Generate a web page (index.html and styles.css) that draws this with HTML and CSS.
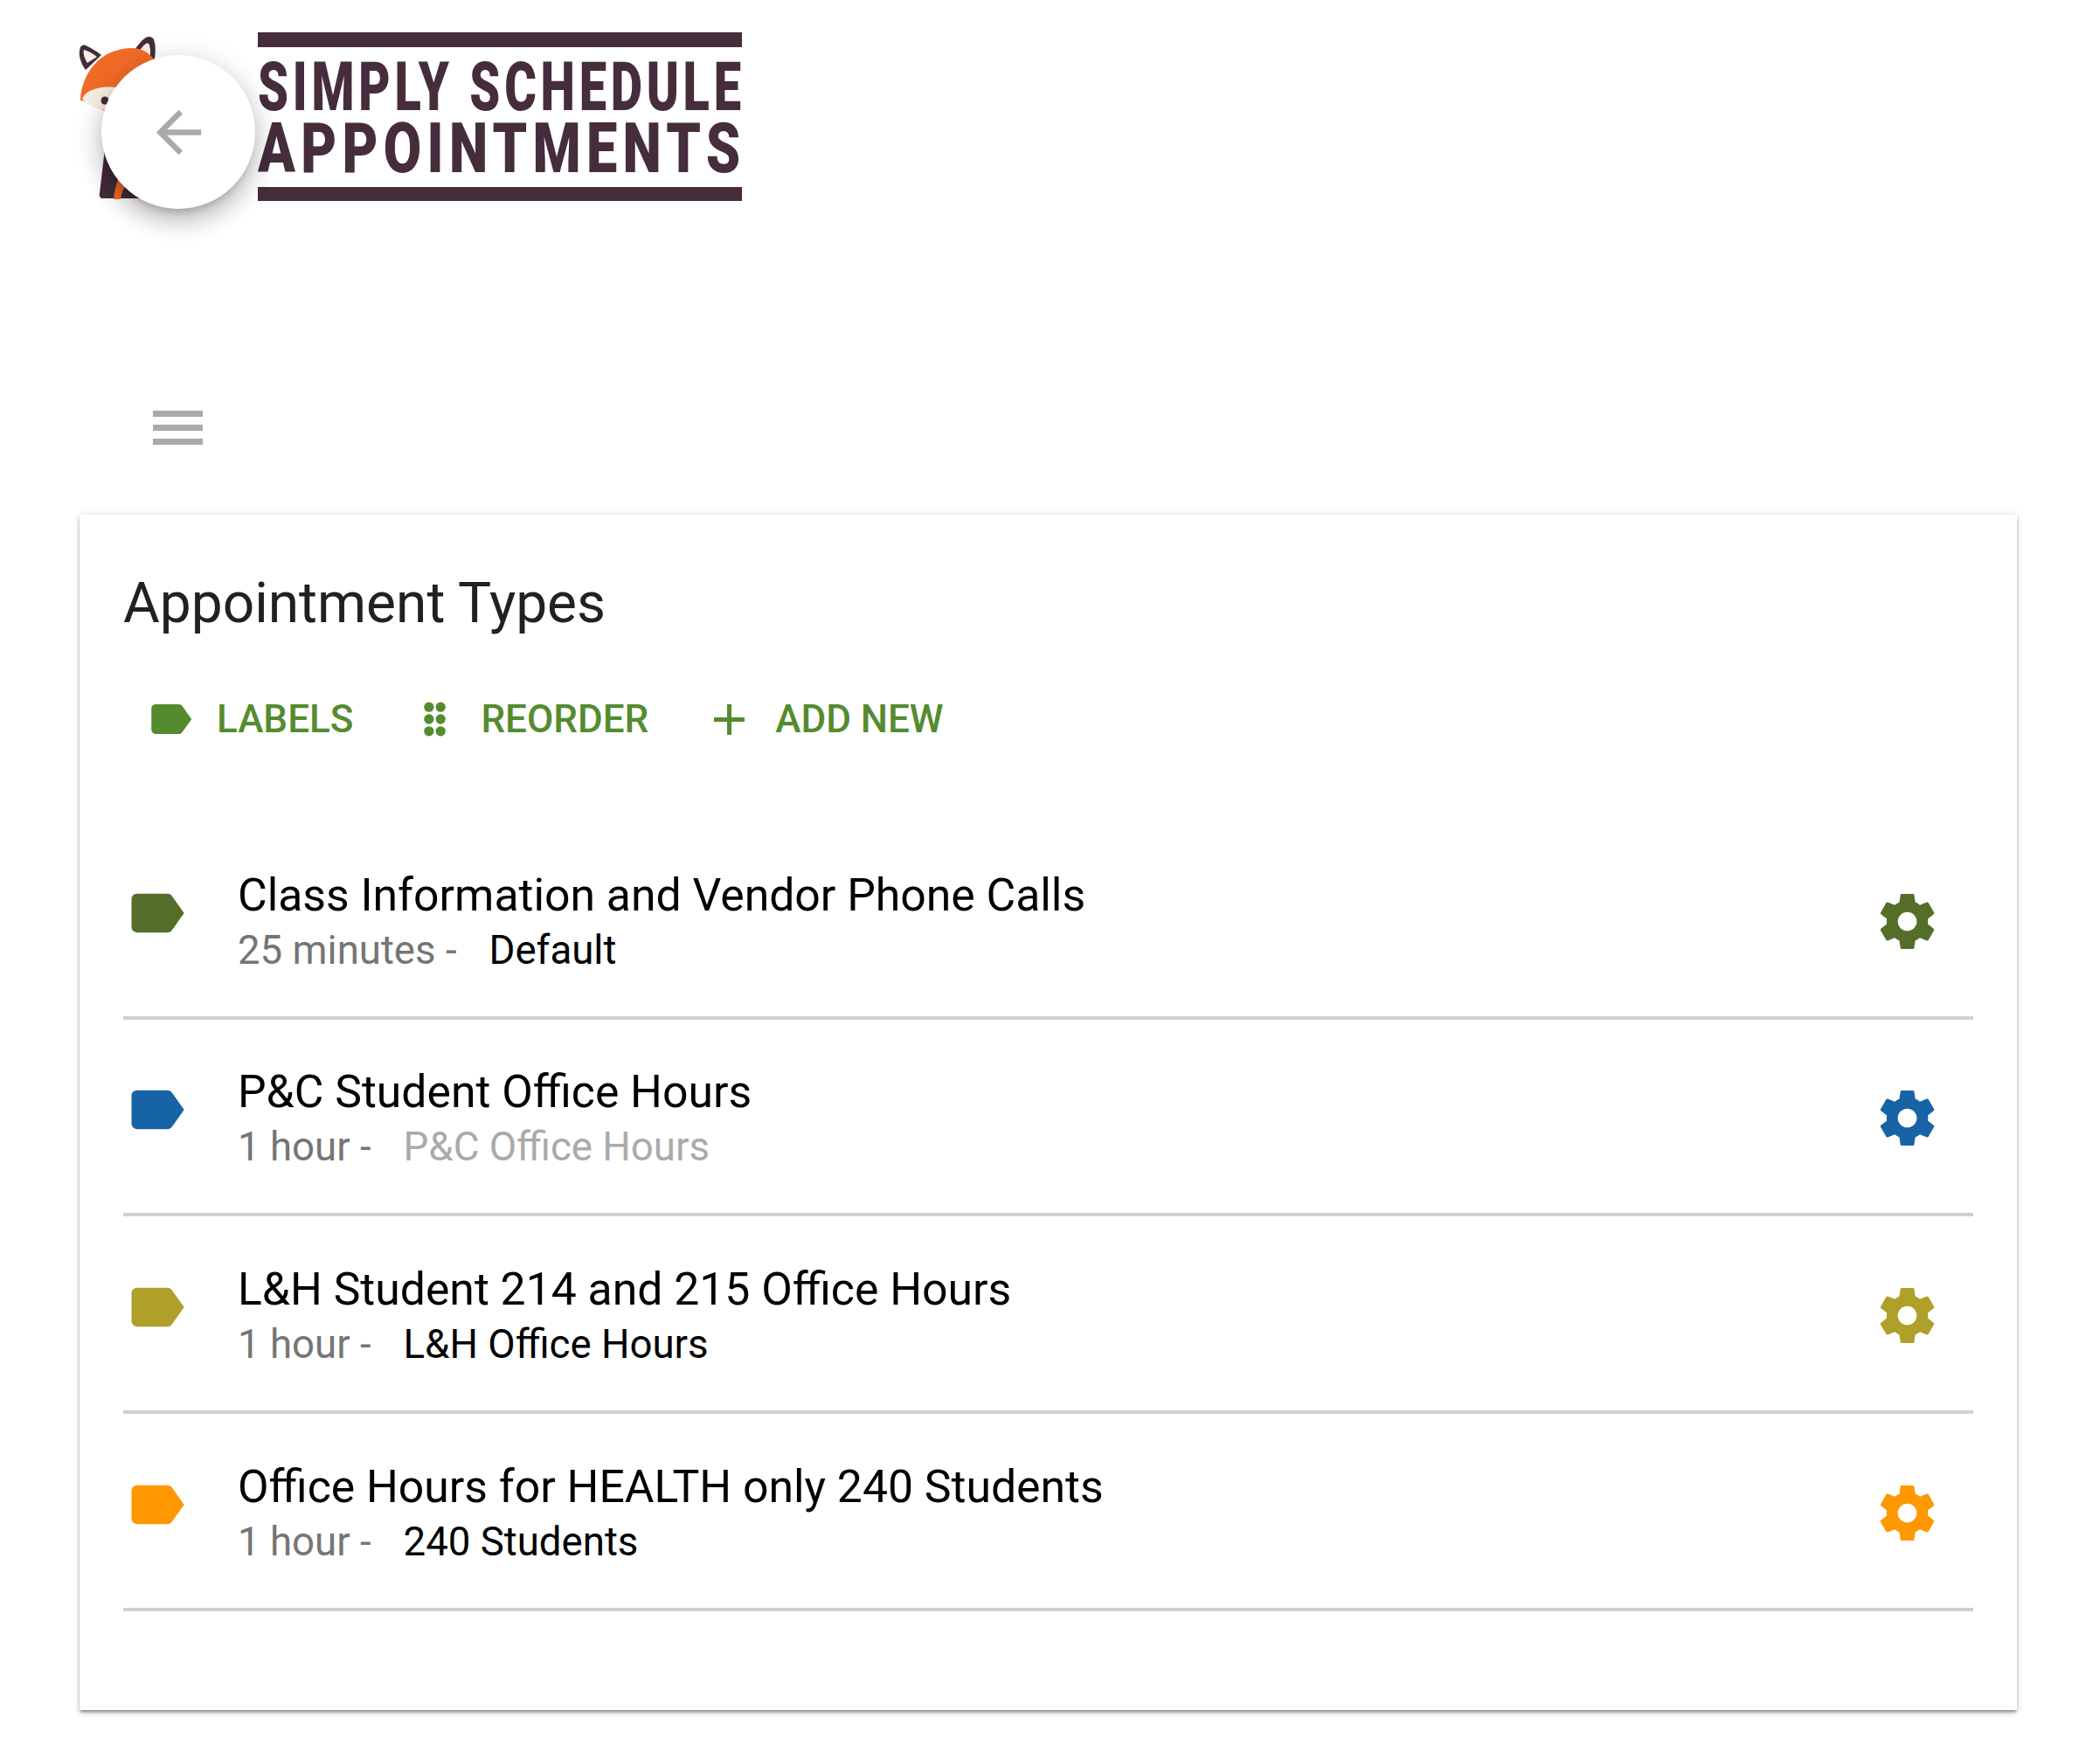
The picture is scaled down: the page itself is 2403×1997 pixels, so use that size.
FILE: index.html
```html
<!DOCTYPE html>
<html lang="en">
<head>
<meta charset="utf-8">
<title>Appointment Types</title>
<link rel="stylesheet" href="styles.css">
</head>
<body>
<svg width="0" height="0" class="defs">
  <symbol id="gear" viewBox="0 0 24 24"><path d="M19.14,12.94c0.04-0.3,0.06-0.61,0.06-0.94c0-0.32-0.02-0.64-0.07-0.94l2.03-1.58c0.18-0.14,0.23-0.41,0.12-0.61 l-1.92-3.32c-0.12-0.22-0.37-0.29-0.59-0.22l-2.39,0.96c-0.5-0.38-1.03-0.7-1.62-0.94L14.4,2.81c-0.04-0.24-0.24-0.41-0.48-0.41 h-3.84c-0.24,0-0.43,0.17-0.47,0.41L9.25,5.35C8.66,5.59,8.12,5.92,7.63,6.29L5.24,5.33c-0.22-0.08-0.47,0-0.59,0.22L2.74,8.87 C2.62,9.08,2.66,9.34,2.86,9.48l2.03,1.58C4.84,11.36,4.8,11.69,4.8,12s0.02,0.64,0.07,0.94l-2.03,1.58 c-0.18,0.14-0.23,0.41-0.12,0.61l1.92,3.32c0.12,0.22,0.37,0.29,0.59,0.22l2.39-0.96c0.5,0.38,1.03,0.7,1.62,0.94l0.36,2.54 c0.05,0.24,0.24,0.41,0.48,0.41h3.84c0.24,0,0.44-0.17,0.47-0.41l0.36-2.54c0.59-0.24,1.13-0.56,1.62-0.94l2.39,0.96 c0.22,0.08,0.47,0,0.59-0.22l1.92-3.32c0.12-0.22,0.07-0.47-0.12-0.61L19.14,12.94z M12,15.3c-1.82,0-3.3-1.48-3.3-3.3 s1.48-3.3,3.3-3.3s3.3,1.48,3.3,3.3S13.82,15.3,12,15.3z"/></symbol>
  <symbol id="label" viewBox="0 0 24 24"><path d="M17.63 5.84C17.27 5.33 16.67 5 16 5L5 5.01C3.9 5.01 3 5.9 3 7v10c0 1.1.9 1.99 2 1.99L16 19c.67 0 1.27-.33 1.63-.84L22 12l-4.37-6.16z"/></symbol>
</svg>

<header class="top">
  <svg class="fox" viewBox="85 35 110 205" width="110" height="205">
    <path class="fox-dark" d="M98 80C92 72 89 62 92 54c1-2 4-3 6-2 7 3 13 7 18 11z"/>
    <path class="fox-cream" d="M100 72C96 66 95 60 96 57 103 59 107 62 111 65z"/>
    <path class="fox-dark" d="M154 58c3-6 8-12 13-15 3-2 7-1 9 2 3 10 2 20-1 30l-20-8z"/>
    <path class="fox-cream" d="M158 60c3-4 6-8 9-10 2-1 4 0 4 2 2 7 1 13-1 20z"/>
    <path class="fox-orange" d="M92 113C94 86 112 56 150 55c22 0 36 18 36 50l-30 40-50-25-12-5c-1 1-2 0-2-2z"/>
    <path class="fox-cream" d="M94 113C98 104 112 98 132 100L140 130 112 124C104 122 98 118 94 113z"/>
    <circle class="fox-dark" cx="120" cy="115" r="4.5"/>
    <path class="fox-dark" d="M120 170l60-5 10 62H118c-3 0-5-2-4-6z"/>
    <path class="fox-orange" d="M130 228c1-12 6-28 10-34l10 14c-6 2-10 8-12 20z"/>
  </svg>
  <div class="logo">
    <div class="logo-bar"></div>
    <div class="logo-line logo-line-a"><span>SIMPLY SCHEDULE</span></div>
    <div class="logo-line logo-line-b"><span>APPOINTMENTS</span></div>
    <div class="logo-bar logo-bar-end"></div>
  </div>
  <button class="back" type="button" aria-label="Back">
    <svg viewBox="0 0 24 24" width="77" height="77"><path d="M20 11H7.83l5.59-5.59L12 4l-8 8 8 8 1.41-1.41L7.83 13H20v-2z"/></svg>
  </button>
</header>

<div class="menu" aria-label="Menu"><i></i><i></i><i></i></div>

<main class="card">
  <h1 class="title">Appointment Types</h1>
  <nav class="actions">
    <a class="action action-labels"><svg class="action-tag" viewBox="0 0 24 24"><use href="#label"/></svg><span>LABELS</span></a>
    <a class="action action-reorder"><svg class="action-drag" viewBox="0 0 24 39"><circle cx="6" cy="6" r="5.5"/><circle cx="19" cy="6" r="5.5"/><circle cx="6" cy="19.5" r="5.5"/><circle cx="19" cy="19.5" r="5.5"/><circle cx="6" cy="33" r="5.5"/><circle cx="19" cy="33" r="5.5"/></svg><span>REORDER</span></a>
    <a class="action action-add"><svg class="action-plus" viewBox="0 0 35 35"><path d="M15 0h5v15h15v5H20v15h-5V20H0v-5h15z"/></svg><span>ADD NEW</span></a>
  </nav>
  <ul class="types">
    <li class="type c-green">
      <svg class="tag"><use href="#label"/></svg>
      <div class="info">
        <div class="name">Class Information and Vendor Phone Calls</div>
        <div class="meta"><span class="dur">25 minutes -</span><span class="lbl">Default</span></div>
      </div>
      <svg class="gear"><use href="#gear"/></svg>
    </li>
    <li class="type c-blue">
      <svg class="tag"><use href="#label"/></svg>
      <div class="info">
        <div class="name">P&amp;C Student Office Hours</div>
        <div class="meta"><span class="dur">1 hour -</span><span class="lbl lbl-muted">P&amp;C Office Hours</span></div>
      </div>
      <svg class="gear"><use href="#gear"/></svg>
    </li>
    <li class="type c-olive">
      <svg class="tag"><use href="#label"/></svg>
      <div class="info">
        <div class="name">L&amp;H Student 214 and 215 Office Hours</div>
        <div class="meta"><span class="dur">1 hour -</span><span class="lbl">L&amp;H Office Hours</span></div>
      </div>
      <svg class="gear"><use href="#gear"/></svg>
    </li>
    <li class="type c-orange">
      <svg class="tag"><use href="#label"/></svg>
      <div class="info">
        <div class="name">Office Hours for HEALTH only 240 Students</div>
        <div class="meta"><span class="dur">1 hour -</span><span class="lbl">240 Students</span></div>
      </div>
      <svg class="gear"><use href="#gear"/></svg>
    </li>
  </ul>
</main>
</body>
</html>
```
FILE: styles.css
```css
* { box-sizing: border-box; }
html, body { margin: 0; padding: 0; background: #fff; }
body {
  width: 2403px;
  height: 1997px;
  overflow: hidden;
  font-family: Roboto, "Liberation Sans", sans-serif;
  position: relative;
}
.defs { position: absolute; }

.top {
  position: relative;
  height: 470px;
  padding: 37px 0 0 295px;
}
.fox { position: absolute; left: 85px; top: 35px; }
.fox-dark { fill: #432c3a; }
.fox-cream { fill: #f7efe4; }
.fox-orange { fill: #f26b26; }

.logo { width: 554px; display: flex; flex-direction: column; }
.logo-bar { height: 17px; background: #452d3c; }
.logo-bar-end { height: 16px; margin-top: 9px; }
.logo-line {
  color: #452d3c;
  font-weight: 900;
  white-space: nowrap;
  overflow: visible;
}
.logo-line span { display: inline-block; transform-origin: 0 50%; }
.logo-line-a { height: 70px; margin-top: 11px; font-size: 77px; line-height: 70px; }
.logo-line-a span { transform: scaleX(0.727); letter-spacing: 6.5px; }
.logo-line-b { height: 70px; font-size: 80px; line-height: 70px; }
.logo-line-b span { transform: scaleX(0.787); letter-spacing: 8px; }

.back {
  position: absolute;
  left: 116px;
  top: 63px;
  width: 176px;
  height: 176px;
  padding: 0;
  border: 0;
  border-radius: 50%;
  background: #fff;
  display: flex;
  align-items: center;
  justify-content: center;
  box-shadow: 0 8px 10px -5px rgba(0,0,0,.2), 0 16px 24px 2px rgba(0,0,0,.14), 0 6px 30px 5px rgba(0,0,0,.12);
}
.back svg { fill: #aaa; display: block; }

.menu {
  margin-left: 175px;
  width: 57px;
  height: 39px;
  display: flex;
  flex-direction: column;
  justify-content: space-between;
}
.menu i { display: block; height: 7px; background: #aaa; }

.card {
  margin: 80px 0 0 91px;
  width: 2217px;
  height: 1368px;
  padding: 62px 50px 0 50px;
  background: #fff;
  box-shadow: 0 3px 3px -1px rgba(0,0,0,.35), 0 4px 6px rgba(0,0,0,.14), 0 0 8px rgba(0,0,0,.12);
}
.title {
  margin: 0;
  font-size: 64px;
  line-height: 80px;
  font-weight: 400;
  color: #212121;
}
.actions {
  display: flex;
  align-items: center;
  height: 60px;
  margin-top: 62px;
  padding-left: 25px;
  color: #558b2f;
  font-size: 44px;
  font-weight: 500;
}
.action { display: flex; align-items: center; fill: #558b2f; }
.action-tag { width: 58px; height: 58px; margin-right: 24px; }
.action-drag { width: 26px; height: 40px; margin-right: 40px; }
.action-plus { width: 35px; height: 35px; margin-right: 35px; }
.action-labels { margin-right: 80px; }
.action-reorder { margin-right: 75px; }

.types { list-style: none; margin: 88px 0 0; padding: 0; }
.type {
  position: relative;
  display: flex;
  align-items: center;
  height: 225.67px;
  border-bottom: 4px solid #d0d0d0;
}
.tag { width: 76px; height: 76px; flex: none; position: relative; top: -7px; }
.info { margin-left: 55px; flex: 1; padding-top: 6px; }
.name { font-size: 51.7px; line-height: 66px; color: #000; }
.meta { font-size: 45.6px; line-height: 60px; display: flex; }
.dur { color: #757575; }
.lbl { color: #000; margin-left: 37px; }
.lbl-muted { color: #aaa; }
.gear { width: 79px; height: 79px; margin-right: 36px; flex: none; position: relative; top: 2.5px; }
.c-green .tag, .c-green .gear { fill: #546e2a; }
.c-blue .tag, .c-blue .gear { fill: #1664a5; }
.c-olive .tag, .c-olive .gear { fill: #aea029; }
.c-orange .tag, .c-orange .gear { fill: #ff9800; }
```
